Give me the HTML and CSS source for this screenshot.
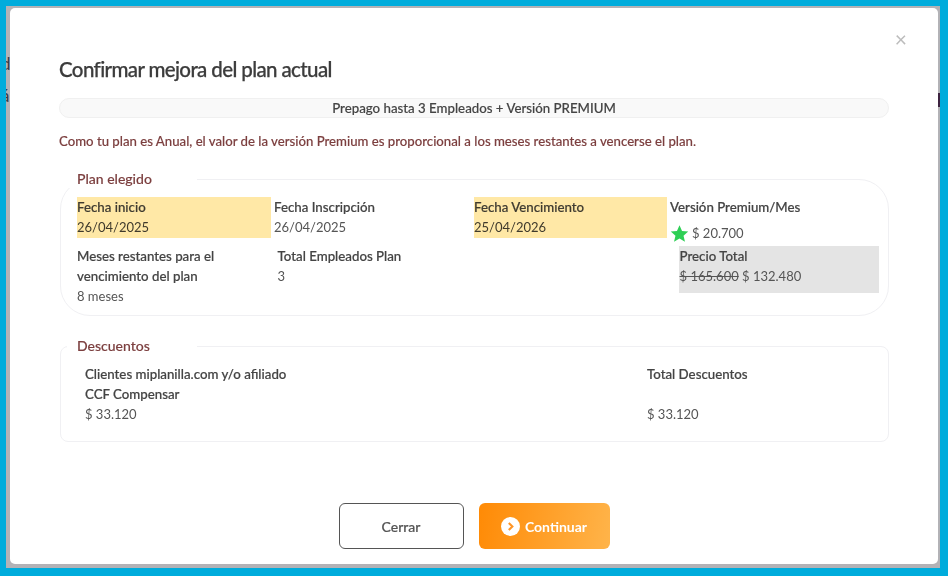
FILE: index.html
```html
<!DOCTYPE html>
<html lang="es">
<head>
<meta charset="UTF-8">
<title>Confirmar mejora del plan</title>
<link rel="stylesheet" href="styles.css">
</head>
<body>
<div class="backdrop">
  <div class="behind behindLeft">
    <p class="bl1">d</p>
    <p class="bl2">á</p>
    <p class="bl3">l</p>
    <p class="bl4">)</p>
  </div>
  <div class="behind behindRight"></div>

  <div class="modal">
    <button class="closeButton">&times;</button>
    <h2 class="modalTitle">Confirmar mejora del plan actual</h2>
    <div class="planPill">Prepago hasta 3 Empleados + Versión PREMIUM</div>
    <p class="notice">Como tu plan es Anual, el valor de la versión Premium es proporcional a los meses restantes a vencerse el plan.</p>

    <fieldset class="box planBox">
      <legend>Plan elegido</legend>
      <div class="row rowTop">
        <div class="cell cellStart highlight">
          <div class="label">Fecha inicio</div>
          <div class="value">26/04/2025</div>
        </div>
        <div class="cell cellSignup">
          <div class="label">Fecha Inscripción</div>
          <div class="value">26/04/2025</div>
        </div>
        <div class="cell cellEnd highlight">
          <div class="label">Fecha Vencimiento</div>
          <div class="value">25/04/2026</div>
        </div>
        <div class="cell cellPremium">
          <div class="label">Versión Premium/Mes</div>
          <div class="value premiumValue">
            <svg class="star" viewBox="0 0 24 24" width="19" height="19"><path d="M12 1.5l3.2 7.2 7.8.8-5.9 5.2 1.8 7.8L12 18.4l-6.9 4.1 1.8-7.8L1 9.5l7.8-.8z"/></svg>
            $ 20.700
          </div>
        </div>
      </div>
      <div class="row rowBottom">
        <div class="cell cellMonths">
          <div class="label">Meses restantes para el vencimiento del plan</div>
          <div class="value">8 meses</div>
        </div>
        <div class="cell cellEmployees">
          <div class="label">Total Empleados Plan</div>
          <div class="value">3</div>
        </div>
        <div class="cell cellTotal">
          <div class="label">Precio Total</div>
          <div class="value"><s>$ 165.600</s> $ 132.480</div>
        </div>
      </div>
    </fieldset>

    <fieldset class="box discountBox">
      <legend>Descuentos</legend>
      <div class="row">
        <div class="cell cellClient">
          <div class="label">Clientes miplanilla.com y/o afiliado</div>
          <div class="label">CCF Compensar</div>
          <div class="value">$ 33.120</div>
        </div>
        <div class="cell cellDiscount">
          <div class="label">Total Descuentos</div>
          <div class="label">&nbsp;</div>
          <div class="value">$ 33.120</div>
        </div>
      </div>
    </fieldset>

    <div class="actions">
      <button class="btn btnClose">Cerrar</button>
      <button class="btn btnContinue">
        <svg viewBox="0 0 20 20" width="19" height="19"><circle cx="10" cy="10" r="10" fill="#fff"/><path d="M8.2 6.2L12 10l-3.8 3.8" fill="none" stroke="#ff9526" stroke-width="2.2"/></svg>
        Continuar
      </button>
    </div>
  </div>
</div>
</body>
</html>
```

FILE: styles.css
```css
* {
  box-sizing: border-box;
}

html, body {
  height: 100%;
}

body {
  margin: 0;
  padding: 6px 8px 8px 6px;
  background-color: #00acdc;
  font-family: Lato, "Liberation Sans", sans-serif;
  font-size: 13px;
  color: #444;
  overflow: hidden;
}

.backdrop {
  position: relative;
  height: 100%;
  padding: 2px 2px 4px 4px;
  background-color: #b3b2b6;
  overflow: hidden;
}

/* page peeking out behind the modal */
.behind {
  position: absolute;
}

.behindLeft {
  left: 0;
  top: 0;
  color: #3a3a46;
  font-size: 17px;
  line-height: 17px;
}

.behindLeft p {
  position: absolute;
  left: -5px;
  margin: 0;
}

.bl1 { top: 49px; }
.bl2 { top: 81px; }
.bl3 { top: 113px; color: #8a6f6f; }
.bl4 { top: 145px; }

.behindRight {
  right: 0;
  top: 87px;
  width: 2px;
  height: 14px;
  background-color: #3d2340;
}

.modal {
  position: relative;
  height: 100%;
  padding: 46px 49px 0;
  background-color: #fff;
  border-radius: 5px;
  filter: blur(0.35px);
}

.closeButton {
  position: absolute;
  top: 19px;
  right: 31px;
  padding: 0;
  border: none;
  background: none;
  font-family: inherit;
  font-size: 21px;
  line-height: 24px;
  color: #bcbcbc;
}

.modalTitle {
  margin: 0 0 14px;
  font-size: 20.5px;
  line-height: 30px;
  font-weight: 500;
  letter-spacing: -0.62px;
  -webkit-text-stroke: 0.25px #3c3c3c;
  color: #3c3c3c;
}

.planPill {
  height: 20px;
  margin-bottom: 13px;
  border: 1px solid #f0f0f0;
  border-radius: 10px;
  background-color: #f9f9f9;
  text-align: center;
  font-size: 13.25px;
  font-weight: 500;
  line-height: 18px;
  -webkit-text-stroke: 0.15px #444;
  color: #444;
}

.notice {
  margin: 0 0 19px;
  font-size: 13.2px;
  line-height: 20px;
  font-weight: 500;
  -webkit-text-stroke: 0.15px #7c3f3f;
  color: #7c3f3f;
}

.box {
  margin: 0 0 0 1px;
  min-width: 0;
  border: 1px solid #f0f0f3;
  background-color: #fff;
}

.box legend {
  width: 130px;
  padding: 0 10px;
  font-size: 14px;
  line-height: 18px;
  font-weight: 500;
  -webkit-text-stroke: 0.15px #7c3f3f;
  color: #7c3f3f;
}

.planBox {
  height: 146px;
  padding: 0 9px 0 16px;
  border-radius: 30px;
}

.planBox legend {
  margin-left: -10px;
}

.discountBox {
  height: 105px;
  margin-top: 21px;
  padding: 0 16px 0 24px;
  border-radius: 8px;
}

.discountBox legend {
  margin-left: -18px;
}

.row {
  display: flex;
}

.label {
  font-size: 13.27px;
  font-weight: 500;
  line-height: 20px;
  -webkit-text-stroke: 0.2px #444;
  color: #444;
}

.value {
  line-height: 20px;
  color: #555;
}

.highlight {
  background-color: #ffe8a6;
}

.highlight .label,
.highlight .value {
  color: #3f3a2c;
}

.rowTop {
  height: 41px;
  margin-top: 9px;
}

.cellStart { width: 194px; }
.cellSignup { width: 203px; padding-left: 3px; }
.cellEnd { width: 193px; }
.cellPremium { padding-left: 3px; }

.rowBottom {
  margin-top: 8px;
}

.cellMonths { width: 160px; }
.cellEmployees { width: 400px; margin-left: 41px; }
.cellTotal {
  width: 201px;
  height: 47px;
  margin-left: 2px;
  padding: 0 0 0 1px;
  background-color: #e4e4e4;
}

.premiumValue {
  display: flex;
  align-items: center;
  gap: 3px;
  margin-top: 6px;
}

.star {
  fill: #2ecf55;
}

.cellClient { width: 562px; }

.discountBox .row {
  margin-top: 9px;
}

.actions {
  display: flex;
  justify-content: center;
  gap: 15px;
  margin-top: 61px;
}

.btn {
  height: 46px;
  font-family: inherit;
  font-size: 14px;
  font-weight: 700;
  border-radius: 6px;
}

.btnClose {
  width: 125px;
  border: 1px solid #555;
  background-color: #fff;
  font-weight: 500;
  -webkit-text-stroke: 0.2px #555;
  color: #555;
}

.btnContinue {
  display: flex;
  align-items: center;
  justify-content: center;
  gap: 5px;
  width: 131px;
  border: none;
  background: linear-gradient(100deg, #ff8a05, #ffb44a);
  color: #fff;
}
```
